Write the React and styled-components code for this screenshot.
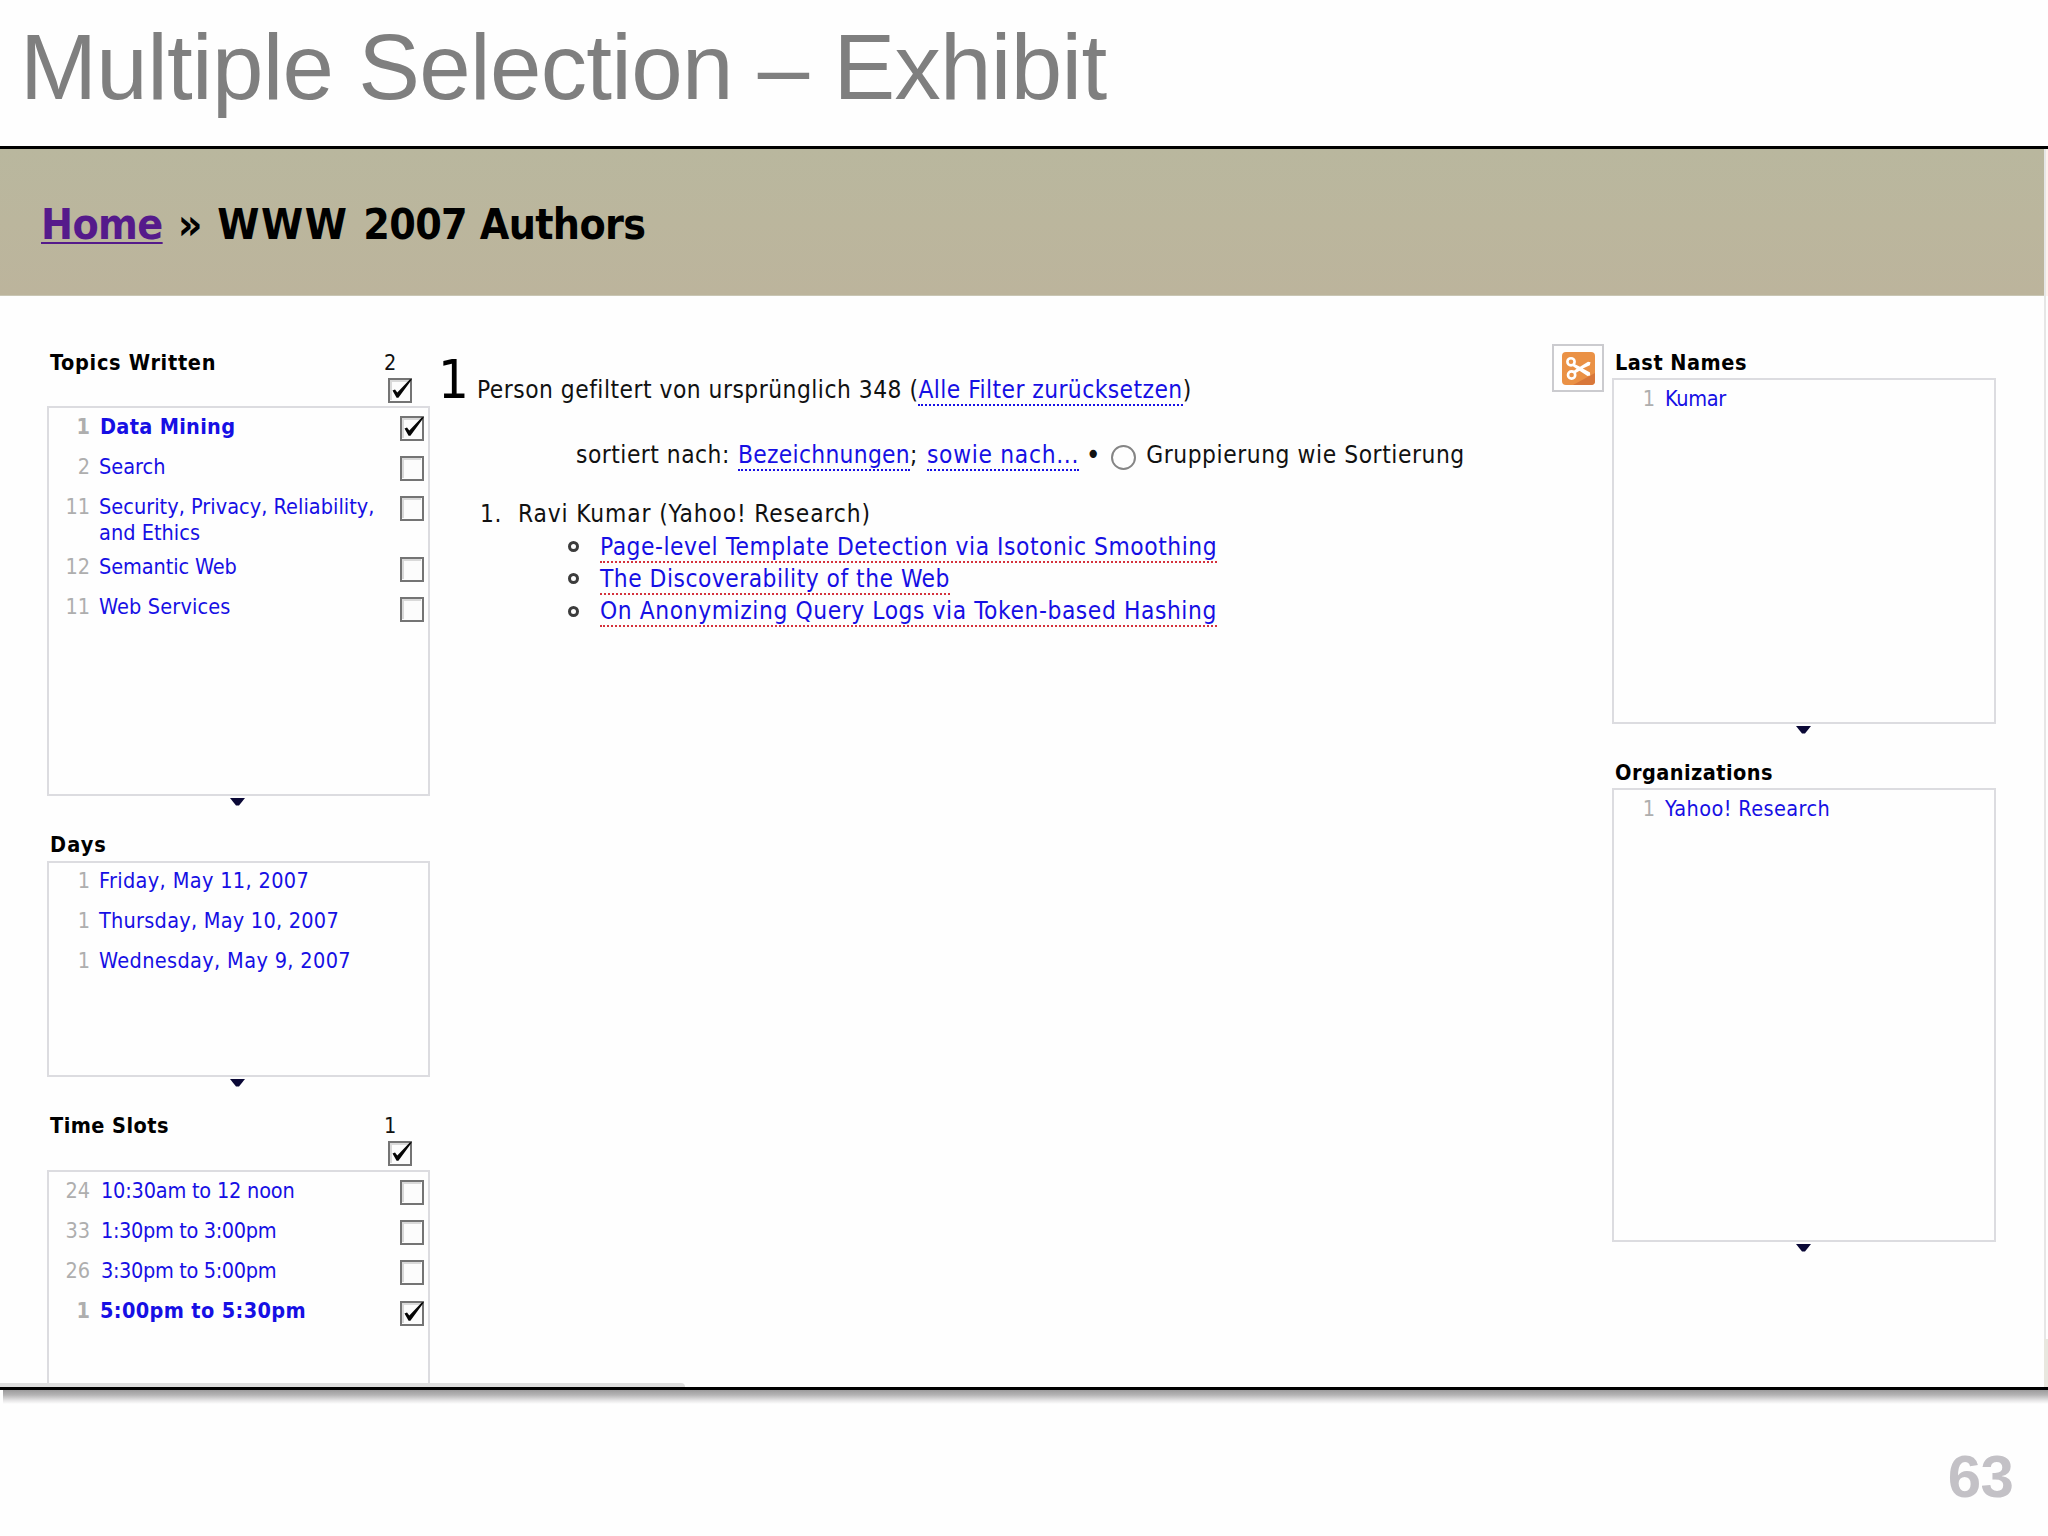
import styled, {createGlobalStyle, css} from 'styled-components';

const palette = {
  link: '#160fe4',
  visited: '#551a8b',
  count: '#aeaeae',
  border: '#dcdce0',
  publication: '#d4323c',
}

const GlobalStyle = createGlobalStyle`
  body {
    margin: 0;
    background: #fefefe;
    overflow: hidden;
  }
`
const Slide = styled.div`
  width: 2048px;
  height: 1536px;
  display: flex;
  flex-direction: column;
  color: #111;
  font-family: "DejaVu Sans Condensed", "DejaVu Sans", sans-serif;
  font-stretch: condensed;
  white-space: nowrap;
`
const SlideTitle = styled.h1`
  margin: 0;
  padding-left: 20px;
  height: 146px;
  line-height: 134px;
  box-sizing: border-box;
  font-family: "Liberation Sans", Arial, sans-serif;
  font-size: 92.5px;
  font-weight: normal;
  font-stretch: normal;
  letter-spacing: -0.68px;
  color: #7f7f7f;
`
const Screen = styled.div`
  height: 1244px;
  box-sizing: border-box;
  border-top: 3px solid #000;
  border-bottom: 3px solid #000;
  display: flex;
  flex-shrink: 0;
  background: #fefefe;
`
const Page = styled.div`
  width: 2044px;
  display: flex;
  flex-direction: column;
`
const ScrollTrack = styled.div`
  flex: 1;
  display: flex;
  flex-direction: column;
  border-left: 2px solid #e6e6e6;
  background: linear-gradient(#fdf1ec 0 147px, #fefefe 147px);
`
const TrackCorner = styled.div`
  margin: auto 0 0 -2px;
  height: 48px;
  background: #e8e7df;
`
const PageHeader = styled.div`
  height: 147px;
  padding-left: 41px;
  box-sizing: border-box;
  display: flex;
  gap: 15px;
  line-height: 151px;
  font-size: 42.5px;
  font-weight: bold;
  color: #000;
  background: linear-gradient(#b9b79e, #bbb69d 50%, #bcb49c);
  border-bottom: 1px solid #c9c6b4;
`
const HomeLink = styled.a`
  color: ${palette.visited};
  letter-spacing: -0.6px;
  text-decoration: underline;
  text-decoration-thickness: 2px;
  text-underline-offset: 3px;
  text-decoration-skip-ink: none;
`
const Heading = styled.span`
  letter-spacing: -0.65px;
`
const Acronym = styled.span`
  letter-spacing: 1.5px;
`
const Columns = styled.div`
  flex: 1;
  min-height: 0;
  display: grid;
  grid-template-columns: 383px 1fr 61px 384px;
  padding: 48px 48px 0 47px;
`
const Column = styled.div`
  padding-top: 6px;
  display: flex;
  flex-direction: column;
  min-height: 0;
`
const FacetHead = styled.div`
  height: ${p => p.$height}px;
  padding: 0 18px 0 3px;
  display: flex;
  justify-content: space-between;
  flex-shrink: 0;
  line-height: 26px;
  font-size: 21.5px;
`
const FacetTitle = styled.span`
  font-weight: bold;
  color: #000;
  letter-spacing: ${p => p.$track || 0}px;
`
const SelectedCount = styled.div`
  width: 28px;
  display: flex;
  flex-direction: column;
  gap: 2px;
  svg {
    margin-left: 4px;
  }
`
const FacetBox = styled.div`
  height: ${p => p.$height}px;
  box-sizing: border-box;
  padding-top: ${p => p.$top}px;
  flex-shrink: 0;
  border: 2px solid ${palette.border};
  ${p => p.$cut && css`
    border-bottom: none;
  `}
`
const FacetRow = styled.div`
  display: grid;
  grid-template-columns: 41px 1fr 24px;
  column-gap: 9px;
  padding: 0 4px 7.6px 0;
  min-height: 40.2px;
  box-sizing: border-box;
  line-height: 26.3px;
  font-size: 21.5px;
  font-weight: ${p => p.$selected ? 'bold' : 'normal'};
  svg {
    margin-top: 2.5px;
  }
`
const ItemCount = styled.span`
  text-align: right;
  color: ${palette.count};
`
const ItemName = styled.span`
  padding-left: ${p => p.$indent || 0}px;
  white-space: pre-line;
  color: ${palette.link};
  letter-spacing: ${p => p.$track || 0}px;
`
const ResizeHandle = styled.div`
  height: 36px;
  padding-right: 2px;
  box-sizing: border-box;
  display: flex;
  justify-content: center;
  flex-shrink: 0;
  svg {
    margin-top: 2px;
  }
`
const Results = styled.div`
  padding: 20px 0 0 11px;
  line-height: 32px;
  font-size: 24.3px;
  letter-spacing: 0.5px;
`
const Summary = styled.div`
  display: flex;
  align-items: baseline;
  gap: 10px;
`
const Total = styled.span`
  width: 26px;
  font-size: 54px;
  text-indent: -3px;
  color: #000;
`
const SortBar = styled.div`
  margin-top: 32.6px;
  padding-left: 135px;
  display: flex;
`
const Control = styled.a`
  color: ${palette.link};
  border-bottom: 2px dotted ${p => p.$line || palette.link};
  letter-spacing: ${p => p.$track || 0.5}px;
`
const SortLabel = styled.span`
  width: 162px;
`
const SortGap = styled.span`
  width: 17px;
`
const Bullet = styled.span`
  width: 32px;
  text-align: center;
  font-size: 28px;
  text-indent: -4px;
  letter-spacing: 0;
`
const Radio = styled.span`
  width: 21px;
  height: 21px;
  margin: 6px 10px 0 0;
  border: 2px solid #858585;
  border-radius: 50%;
`
const GroupLabel = styled.span`
  letter-spacing: 0.57px;
`
const PersonList = styled.div`
  margin-top: 27.6px;
  display: grid;
  grid-template-columns: 38px 1fr;
  padding-left: 39px;
  row-gap: 0.4px;
`
const Person = styled.span`
  letter-spacing: 0.87px;
`
const Papers = styled.div`
  grid-column: 2;
`
const Paper = styled.div`
  height: 32.2px;
  padding-left: 50px;
  display: flex;
  align-items: center;
  gap: 21px;
`
const Ring = styled.span`
  width: 5px;
  height: 5px;
  border: 3px solid #3c3c3c;
  border-radius: 50%;
`
const CopyButton = styled.div`
  width: 52px;
  height: 48px;
  margin-left: 1px;
  box-sizing: border-box;
  border: 2px solid #cbcbcf;
  display: flex;
  align-items: center;
  justify-content: center;
`
const BottomEdge = styled.div`
  width: 685px;
  height: 4px;
  margin-top: auto;
  flex-shrink: 0;
  border-top-right-radius: 4px;
  background: #dedede;
`
const Shadow = styled.div`
  height: 14px;
  flex-shrink: 0;
  margin-left: 3px;
  background: linear-gradient(#9c9b9c, #b4b3b4 35%, #e6e5e6 75%, #fefefe);
`
const SlideNumber = styled.div`
  padding: 38px 35px 0 0;
  text-align: right;
  line-height: 70px;
  font-family: "Liberation Sans", Arial, sans-serif;
  font-size: 60px;
  font-weight: bold;
  font-stretch: normal;
  letter-spacing: -0.8px;
  color: #c3c1c6;
`

function Checkbox({checked}) {
  return (
    <svg width="24" height="25" viewBox="0 0 24 25">
      <rect x="1" y="1" width="22" height="23" fill="#fcfcfc" stroke="#747474" strokeWidth="2"/>
      <path d="M3 22V3H21" fill="none" stroke="#d9d9d9" strokeWidth="2"/>
      {checked && <path d="M4.5 12.5L7 11.5L9.3 14.5L22 1.2H24L10.4 19.8H8.6Z" fill="#050505"/>}
    </svg>
  )
}

function Arrow() {
  return (
    <svg width="15" height="8" viewBox="0 0 15 8">
      <path d="M0 0H15L9 7.6H6Z" fill="#0a0836"/>
    </svg>
  )
}

function Scissors() {
  return (
    <svg width="33" height="33" viewBox="0 0 33 33">
      <rect width="33" height="33" rx="4" fill="#ea9145"/>
      <path d="M33 21V29Q33 33 29 33H11Z" fill="#d8773a"/>
      <g fill="none" stroke="#fff">
        <circle cx="9" cy="9.8" r="3.6" strokeWidth="2.6"/>
        <circle cx="9.6" cy="23" r="3.6" strokeWidth="2.6"/>
      </g>
      <path d="M11.5 11.5L18 14.8L26 9.8L28.5 10.2L27.8 13.2L20.8 16.6L28 20.6L28.2 23.4L25.5 24L17.5 18.8L12.5 21.8L10.8 19.5L14.6 16.8L10.5 14Z" fill="#fff"/>
    </svg>
  )
}

function Facet({facet}) {
  return (
    <>
      <FacetHead $height={facet.head}>
        <FacetTitle $track={facet.track}>{facet.title}</FacetTitle>
        {facet.selected && (
          <SelectedCount>
            {facet.selected}
            <Checkbox checked/>
          </SelectedCount>
        )}
      </FacetHead>
      <FacetBox $height={facet.height} $top={facet.top} $cut={facet.cut}>
        {facet.items.map(([count, name, track, checked]) => (
          <FacetRow key={name} $selected={checked}>
            <ItemCount>{count}</ItemCount>
            <ItemName $track={track} $indent={checked ? 1 : facet.indent}>{name}</ItemName>
            {facet.selected && <Checkbox checked={checked}/>}
          </FacetRow>
        ))}
      </FacetBox>
      {!facet.cut && <ResizeHandle><Arrow/></ResizeHandle>}
    </>
  )
}

const leftFacets = [
  {
    title: 'Topics Written', track: 0.7, selected: 2, head: 56, height: 390, top: 5.5,
    items: [
      [1, 'Data Mining', 0.3, true],
      [2, 'Search', 0],
      [11, 'Security, Privacy, Reliability,\nand Ethics', 0.03],
      [12, 'Semantic Web', -0.1],
      [11, 'Web Services', 0.15],
    ],
  },
  {
    title: 'Days', track: 1.1, head: 29, height: 216, top: 5,
    items: [
      [1, 'Friday, May 11, 2007', 0.36],
      [1, 'Thursday, May 10, 2007', 0.25],
      [1, 'Wednesday, May 9, 2007', 0.36],
    ],
  },
  {
    title: 'Time Slots', track: 0.45, selected: 1, head: 57, height: 217, top: 5.5, cut: true, indent: 2,
    items: [
      [24, '10:30am to 12 noon', -0.2],
      [33, '1:30pm to 3:00pm', -0.35],
      [26, '3:30pm to 5:00pm', -0.35],
      [1, '5:00pm to 5:30pm', 0.36, true],
    ],
  },
]

const rightFacets = [
  {title: 'Last Names', track: 0.5, head: 28, height: 346, top: 5.5, indent: 1, items: [[1, 'Kumar', -0.3]]},
  {title: 'Organizations', track: 0.45, head: 28, height: 454, top: 5.5, indent: 1, items: [[1, 'Yahoo! Research', 0.4]]},
]

const papers = [
  ['Page-level Template Detection via Isotonic Smoothing', 0.55],
  ['The Discoverability of the Web', 0.5],
  ['On Anonymizing Query Logs via Token-based Hashing', 0.59],
]

function App() {
  return (
    <Slide>
      <GlobalStyle/>
      <SlideTitle>Multiple Selection – Exhibit</SlideTitle>
      <Screen>
        <Page>
          <PageHeader>
            <HomeLink>Home</HomeLink>
            <span>»</span>
            <Heading><Acronym>WWW </Acronym>2007 Authors</Heading>
          </PageHeader>
          <Columns>
            <Column>
              {leftFacets.map((facet) => <Facet key={facet.title} facet={facet}/>)}
            </Column>
            <Results>
              <Summary>
                <Total>1</Total>
                <span>
                  Person gefiltert von ursprünglich 348 (<Control $track={0.45}>Alle Filter zurücksetzen</Control>)
                </span>
              </Summary>
              <SortBar>
                <SortLabel>sortiert nach:</SortLabel>
                <span><Control $track={0.3}>Bezeichnungen</Control></span>
                <SortGap>;</SortGap>
                <span><Control $track={0.7}>sowie nach...</Control></span>
                <Bullet>•</Bullet>
                <Radio/>
                <GroupLabel>Gruppierung wie Sortierung</GroupLabel>
              </SortBar>
              <PersonList>
                <span>1.</span>
                <Person>Ravi Kumar (Yahoo! Research)</Person>
                <Papers>
                  {papers.map(([title, track]) => (
                    <Paper key={title}>
                      <Ring/>
                      <span><Control $line={palette.publication} $track={track}>{title}</Control></span>
                    </Paper>
                  ))}
                </Papers>
              </PersonList>
            </Results>
            <CopyButton><Scissors/></CopyButton>
            <Column>
              {rightFacets.map((facet) => <Facet key={facet.title} facet={facet}/>)}
            </Column>
          </Columns>
          <BottomEdge/>
        </Page>
        <ScrollTrack><TrackCorner/></ScrollTrack>
      </Screen>
      <Shadow/>
      <SlideNumber>63</SlideNumber>
    </Slide>
  )
}

export default App;
